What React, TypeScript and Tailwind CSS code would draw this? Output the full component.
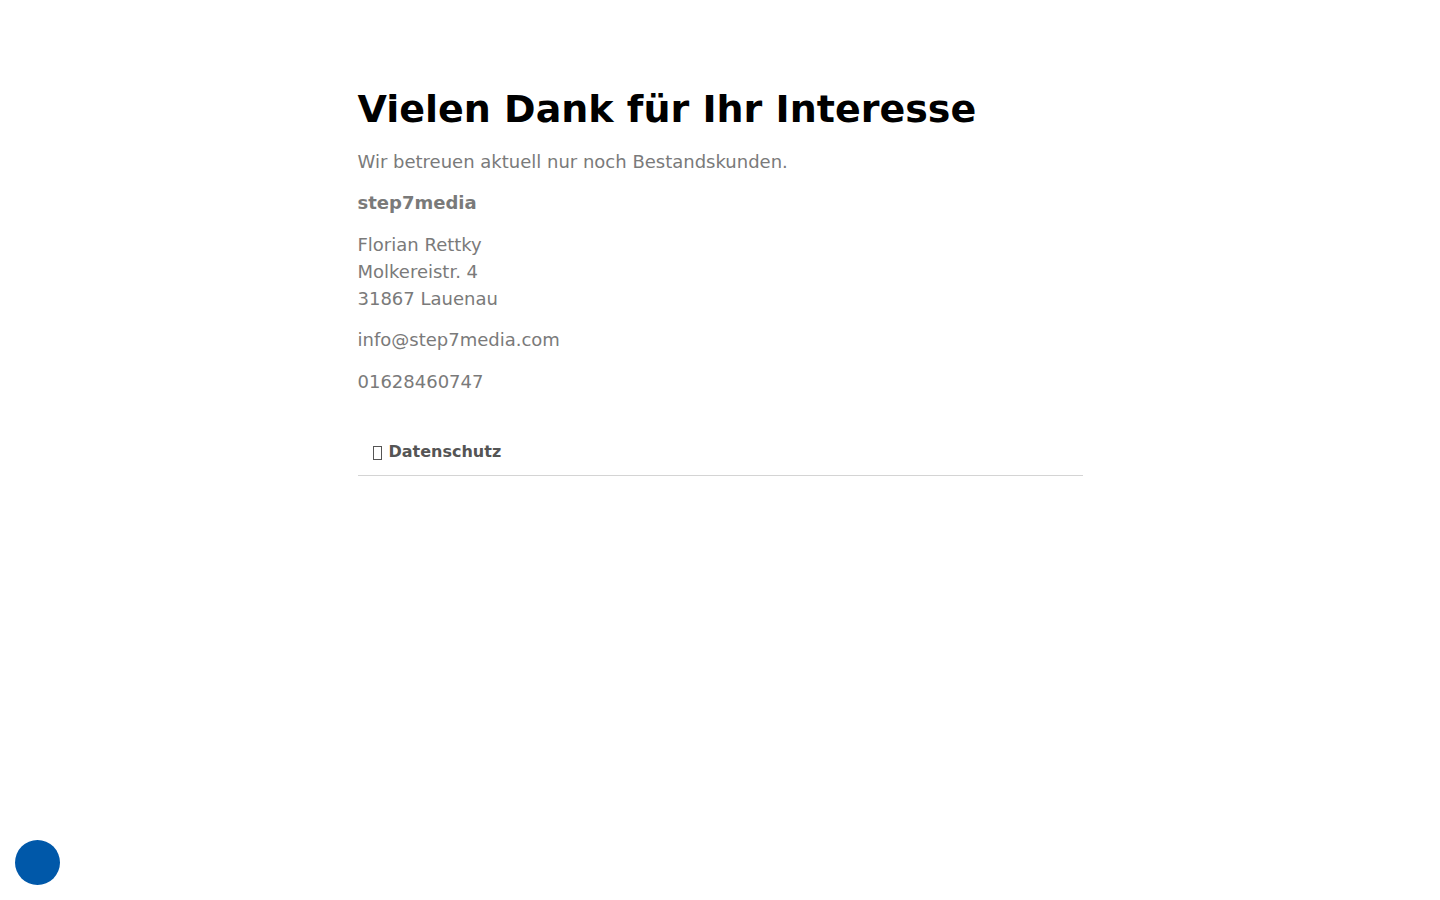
export default function App() {
  return (
    <div className="min-h-screen bg-white px-4 pt-[86px] font-['DejaVu_Sans',sans-serif] text-lg leading-[27px] text-[#7a7a7a]">
      <main className="mx-auto max-w-[725px]">
        <h1 className="mb-[15px] text-[38px] leading-[47px] font-bold text-black">
          Vielen Dank für Ihr Interesse
        </h1>
        <div className="flex flex-col gap-[15px]">
          <div className="flex flex-col gap-[14px]">
            <p>Wir betreuen aktuell nur noch Bestandskunden.</p>
            <p className="font-bold">step7media</p>
          </div>
          <div className="flex flex-col gap-[14px]">
            <address className="not-italic">
              Florian Rettky
              <br />
              Molkereistr. 4
              <br />
              31867 Lauenau
            </address>
            <p>info@step7media.com</p>
          </div>
          <p>01628460747</p>
        </div>
        <section className="mt-8 border-b border-[#d4d4d4]">
          <button type="button" aria-expanded="false" className="flex w-full items-center gap-[6px] px-[15px] pt-[13px] pb-[11px] text-left text-base leading-6 font-bold text-[#555]">
            <svg aria-hidden="true" width="10" height="16" viewBox="0 0 10 16" fill="none" stroke="currentColor">
              <rect x="0.5" y="2.5" width="8" height="13" />
            </svg>
            Datenschutz
          </button>
        </section>
      </main>
      <button type="button" aria-label="Cookie-Einstellungen" className="fixed bottom-[15px] left-[15px] size-[45px] rounded-full bg-[#0058a9]" />
    </div>
  );
}
